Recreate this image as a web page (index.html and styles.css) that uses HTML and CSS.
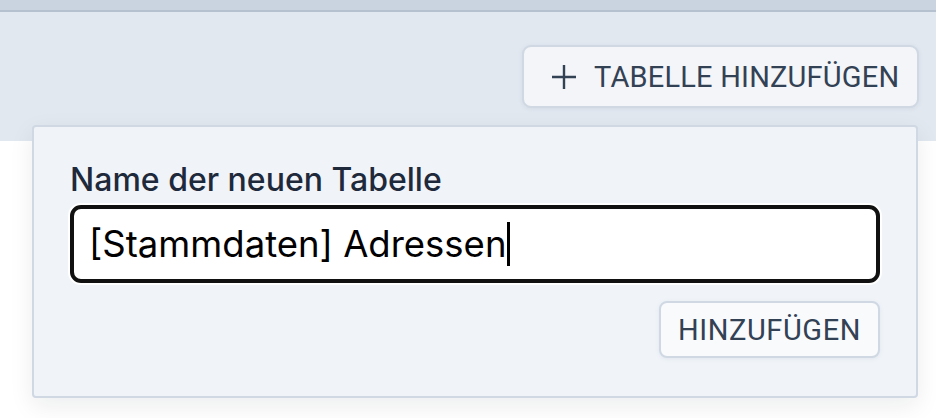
FILE: index.html
```html
<!DOCTYPE html>
<html lang="de">

<head>
    <meta charset="UTF-8">
    <meta name="viewport" content="width=device-width, initial-scale=1.0">
    <title>Tabellen</title>
    <link rel="stylesheet" href="styles.css">
</head>

<body>

    <div class="topbar"></div>

    <div class="toolbar">
        <button class="addTable">
            <svg class="plus" width="26" height="26" viewBox="0 0 26 26">
                <path d="M13 1v24M1 13h24" stroke="#334155" stroke-width="2.4" fill="none" />
            </svg>
            <span>Tabelle hinzufügen</span>
        </button>
    </div>

    <div class="popover">
        <div class="label">Name der neuen Tabelle</div>
        <div class="input">
            <span class="inputText">[Stammdaten] Adressen</span><span class="caret"></span>
        </div>
        <div class="actions">
            <button class="submit">Hinzufügen</button>
        </div>
    </div>

</body>

</html>
```

FILE: styles.css
```css
body {
    margin: 0;
    font-family: 'Inter', 'Roboto', sans-serif;
    background: #ffffff;
    width: 936px;
    height: 418px;
    position: relative;
    overflow: hidden;
}

.topbar {
    height: 10px;
    background: #cad4e0;
    border-bottom: 2px solid #b6c1d0;
}

.toolbar {
    height: 129px;
    background: #e2e8f0;
    display: flex;
    justify-content: flex-end;
    align-items: flex-start;
    padding-top: 33px;
    padding-right: 17px;
    box-sizing: border-box;
}

.addTable {
    display: flex;
    align-items: center;
    height: 63px;
    width: 397px;
    padding: 0 0 0 27px;
    box-sizing: border-box;
    border: 2px solid #cfd8e3;
    border-radius: 9px;
    background: #f3f5f8;
    box-shadow: 0 1px 4px rgba(100, 116, 139, 0.12);
    font-family: 'Roboto', sans-serif;
    font-size: 29px;
    letter-spacing: 0.2px;
    color: #334155;
    text-transform: uppercase;
    cursor: pointer;
}

.plus {
    margin-right: 17px;
}

.popover {
    position: absolute;
    top: 125px;
    left: 32px;
    width: 886px;
    height: 273px;
    box-sizing: border-box;
    padding: 35px 36px 0 36px;
    background: #f0f4f9;
    border: 2px solid #cfd8e3;
    border-radius: 4px;
    box-shadow: 0 8px 24px rgba(15, 23, 42, 0.08);
}

.label {
    font-size: 32px;
    font-weight: 500;
    color: #1e293b;
    line-height: 36px;
}

.input {
    margin-top: 7px;
    height: 78px;
    box-sizing: border-box;
    border: 4px solid #111111;
    border-radius: 11px;
    background: #ffffff;
    box-shadow: 0 0 0 2px #ffffff;
    display: flex;
    align-items: center;
    padding-left: 15px;
    font-size: 36.5px;
    color: #000000;
}

.caret {
    display: inline-block;
    width: 3px;
    height: 44px;
    margin-left: 1px;
    background: #000000;
}

.actions {
    display: flex;
    justify-content: flex-end;
    margin-top: 18px;
}

.submit {
    height: 57px;
    width: 221px;
    box-sizing: border-box;
    border: 2px solid #cfd8e3;
    border-radius: 8px;
    background: #f8fafc;
    box-shadow: 0 1px 4px rgba(100, 116, 139, 0.1);
    font-family: 'Roboto', sans-serif;
    font-size: 29px;
    letter-spacing: 0.6px;
    color: #334155;
    text-transform: uppercase;
    cursor: pointer;
}
```
